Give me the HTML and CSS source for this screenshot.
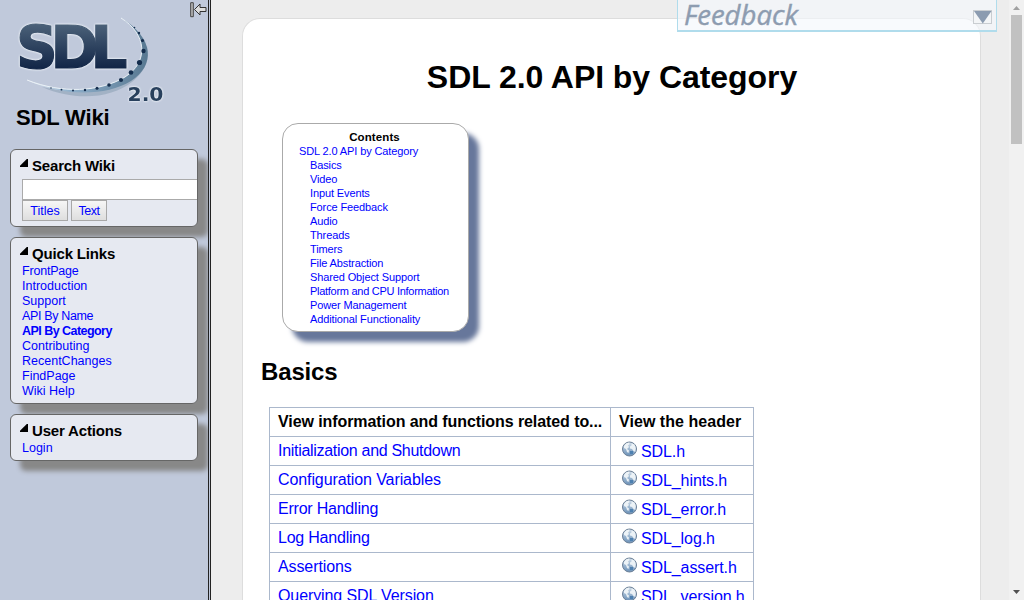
FILE: index.html
```
<!DOCTYPE html>
<html lang="en">
<head>
<meta charset="utf-8">
<title>SDL 2.0 API by Category - SDL Wiki</title>
<link rel="stylesheet" href="styles.css">
</head>
<body>
<svg class="defs" width="0" height="0">
  <defs>
    <linearGradient id="sea" x1="0" y1="0" x2="0" y2="1"><stop offset="0" stop-color="#d3dfea"/><stop offset=".5" stop-color="#9db7d1"/><stop offset="1" stop-color="#6a90b7"/></linearGradient>
    <symbol id="globe" viewBox="0 0 16 16">
      <circle cx="7.500" cy="8" r="7" fill="url(#sea)" stroke="#6b7f96" stroke-width="1"/>
      <path d="M2 5l2-2.500 3-1 .5 1.500-1.500 1.500 1 1.500-2 2 2 1.500-.5 2.500-1.500-1-1-3-2-1zM9.500 2.500l3 1 1.300 3.500-.5 4-1.800-1-1.500-2-2-.5 0-2 1.500-1z" fill="#f3f7fa" opacity=".9"/>
      <path d="M8 10h3v3h-3z" fill="#4d80b0"/>
    </symbol>
  </defs>
</svg>
<aside class="sidebar">
  <svg class="collapse" viewBox="0 0 17 16"><path d="M.7.7h2.600v14H.7z" fill="#bbb" stroke="#444"/><path d="M4.500 7.500l5.500-5.500v3.500h6v4h-6v3.500z" fill="#ddd" stroke="#333"/></svg>
  <svg class="logo" viewBox="0 0 170 110">
    <defs>
      <linearGradient id="ink" gradientUnits="userSpaceOnUse" x1="0" y1="25" x2="0" y2="68"><stop offset="0" stop-color="#4a6078"/><stop offset="1" stop-color="#122647"/></linearGradient>
      <linearGradient id="swoosh" x1="0" y1="0" x2="1" y2="0"><stop offset="0" stop-color="#e4eef6"/><stop offset=".35" stop-color="#8fb0cc"/><stop offset="1" stop-color="#587891"/></linearGradient>
    </defs>
    <path d="M42 87C76 102 112 98 132 82C146 71 150 58 147 46C146 63 137 73 124 80C100 93 73 94 42 87z" fill="#98a9bd" opacity=".75"/>
    <path d="M27 80C62 94 100 92 125 77C149 62 147 34 121 18C155 38 155 66 131 81C105 97 61 96 27 80z" fill="url(#swoosh)"/>
    <path d="M27 80C62 94 100 92 125 77C149 62 147 34 121 18" fill="none" stroke="#f2f7fb" stroke-width=".9"/>
    <g fill="#142d4d"><circle cx="51" cy="88" r=".7"/><circle cx="61.500" cy="89.700" r=".9"/><circle cx="73" cy="90.500" r="1"/><circle cx="85" cy="90" r="1.200"/><circle cx="97" cy="88.300" r="1.500"/><circle cx="109" cy="85" r="1.800"/><circle cx="121" cy="80" r="2.100"/><circle cx="131" cy="72.500" r="2.300"/><circle cx="139.500" cy="62.500" r="2.600"/><circle cx="143.500" cy="51" r="2.200"/><circle cx="142.500" cy="40.500" r="1.600"/><circle cx="139" cy="33" r="1.200"/><circle cx="134.500" cy="27.500" r=".8"/></g>
    <text class="logo-name" x="16 50.500 90.500" y="67.500">SDL</text>
    <text class="logo-version" x="127.500" y="101" textLength="36" lengthAdjust="spacingAndGlyphs">2.0</text>
  </svg>
  <div class="site-name">SDL Wiki</div>
  <section class="panel search">
    <h3>Search Wiki</h3>
    <input class="query" type="text" aria-label="Search">
    <div class="buttons"><button class="titles">Titles</button><button>Text</button></div>
  </section>
  <section class="panel quick">
    <h3>Quick Links</h3>
    <a class="tight">FrontPage</a><a>Introduction</a><a>Support</a><a class="tight">API By Name</a><a class="tight current">API By Category</a><a>Contributing</a><a>RecentChanges</a><a>FindPage</a><a>Wiki Help</a>
  </section>
  <section class="panel">
    <h3>User Actions</h3>
    <a>Login</a>
  </section>
</aside>
<main class="main">
  <article class="page">
    <h1>SDL 2.0 API by Category</h1>
    <nav class="toc">
      <strong>Contents</strong>
      <a class="top">SDL 2.0 API by Category</a>
      <a>Basics</a><a>Video</a><a>Input Events</a><a>Force Feedback</a><a>Audio</a><a>Threads</a><a>Timers</a><a>File Abstraction</a><a>Shared Object Support</a><a class="tight">Platform and CPU Information</a><a>Power Management</a><a>Additional Functionality</a>
    </nav>
    <h2>Basics</h2>
    <table class="api">
      <tr><th>View information and functions related to...</th><th class="header">View the header</th></tr>
      <tr><td><a class="tight">Initialization and Shutdown</a></td><td><a class="ext"><svg><use href="#globe"/></svg>SDL.h</a></td></tr>
      <tr><td><a>Configuration Variables</a></td><td><a class="ext"><svg><use href="#globe"/></svg>SDL_hints.h</a></td></tr>
      <tr><td><a class="snug">Error Handling</a></td><td><a class="ext"><svg><use href="#globe"/></svg>SDL_error.h</a></td></tr>
      <tr><td><a class="snug">Log Handling</a></td><td><a class="ext"><svg><use href="#globe"/></svg>SDL_log.h</a></td></tr>
      <tr><td><a>Assertions</a></td><td><a class="ext"><svg><use href="#globe"/></svg>SDL_assert.h</a></td></tr>
      <tr><td><a>Querying SDL Version</a></td><td><a class="ext"><svg><use href="#globe"/></svg>SDL_version.h</a></td></tr>
    </table>
  </article>
  <div class="feedback">
    <svg viewBox="0 0 318 30">
      <text class="feedback-label" x="6" y="25" textLength="114" lengthAdjust="spacingAndGlyphs">Feedback</text>
      <rect x="295.500" y="10.500" width="18" height="13" fill="#f3f5f7" stroke="#c9cdd1"/>
      <path d="M296 11h17.500l-8.700 12.500z" fill="#8b9bb0"/>
    </svg>
  </div>
</main>
<div class="scrollbar">
  <svg class="arrow" viewBox="0 0 15 15"><path d="M4 10h7L7.500 6z" fill="#a0a0a0"/></svg>
  <div class="thumb"></div>
  <svg class="arrow" viewBox="0 0 15 15"><path d="M4 5h7L7.500 9z" fill="#505050"/></svg>
</div>
</body>
</html>
```
FILE: styles.css
```
* { box-sizing: border-box; }
body { margin: 0; height: 600px; display: flex; overflow: hidden; background: #ededed; color: #000; font-family: "Liberation Sans", Arial, sans-serif; }
a { color: #00f; }
.defs { position: absolute; }
h1, h2, h3 { margin: 0; font-weight: bold; }

.sidebar { flex: none; width: 211px; height: 600px; position: relative; overflow: hidden; background: #c0c9db; border-right: 3px double #222; display: flex; flex-direction: column; padding-left: 10px; font-size: 12.500px; line-height: 15px; }
.collapse { position: absolute; left: 190px; top: 2px; width: 17px; height: 16px; }
.logo { width: 170px; height: 110px; margin: 0 0 -4px -10px; flex: none; }
.logo-name { font: bold 58px "DejaVu Sans", sans-serif; fill: url(#ink); stroke: url(#ink); stroke-width: 1.200px; filter: drop-shadow(0 0 1px #eef3f8) drop-shadow(0 0 .5px #eef3f8); }
.logo-version { font: bold 20px "DejaVu Sans", sans-serif; fill: #28405d; filter: drop-shadow(0 0 1px #eef3f8) drop-shadow(0 0 .5px #eef3f8); }
.site-name { font-size: 22px; line-height: 24px; font-weight: bold; letter-spacing: -.15px; padding-left: 6px; margin-bottom: 19px; }
.panel { position: relative; flex: none; width: 188px; margin-bottom: 10px; padding: 7px 0 4px 11px; border: 1px solid #666; border-radius: 6px; background: #e6e9f1; box-shadow: 10px 10px 5px #888; }
.panel h3 { font-size: 15px; line-height: 17px; letter-spacing: -.17px; padding-left: 10px; margin-bottom: 2px; }
.panel h3::before { content: ""; float: left; width: 8px; height: 8px; margin: 2px 0 0 -12px; background: #000; clip-path: polygon(100% 0, 100% 100%, 0 100%, 0 85%, 85% 0); }
.panel a { display: block; height: 15px; }
.search { height: 78px; }
.query { display: block; width: 175px; height: 21px; margin: 5px 0 0; border: 1px solid #aaa; border-right: 0; background: #fff; }
.buttons { display: flex; gap: 3px; }
.buttons button { width: 36px; height: 21px; padding: 0; border: 1px solid #a8a8a8; border-radius: 0; background: linear-gradient(#f6f6f6, #dedede); color: #00f; font: 12.500px "Liberation Sans", Arial, sans-serif; letter-spacing: -.5px; }
.buttons .titles { width: 46px; letter-spacing: 0; }
.panel .tight { letter-spacing: -.35px; }
.quick a:first-of-type { letter-spacing: -.2px; }
.panel .current { font-weight: bold; letter-spacing: -.54px; }

.main { flex: 1; min-width: 0; position: relative; padding: 18px 28px 0 31px; }
.page { height: 582px; overflow: hidden; background: #fff; border: 1px solid #ddd; border-bottom: 0; border-radius: 18px 18px 0 0; padding: 39px 18px 0; }
h1 { font-size: 32px; line-height: 38px; letter-spacing: -.06px; text-align: center; padding-left: 1px; }
.toc { width: 187px; height: 209px; margin: 27px 0 0 21px; padding: 6px 16px; border: 1px solid #aaa; border-radius: 16px; background: #fff; box-shadow: 10px 10px 5px #67779b; font-size: 11px; line-height: 14px; letter-spacing: -.12px; display: flex; flex-direction: column; white-space: nowrap; }
.toc strong { text-align: center; font-size: 11.500px; letter-spacing: .1px; margin-left: -2px; }
.toc a { padding-left: 11px; }
.toc .top { padding-left: 0; }
.toc .tight { letter-spacing: -.28px; }
h2 { font-size: 24px; line-height: 28px; letter-spacing: -.15px; margin-top: 26px; }
.api { margin: 21px 0 0 8px; border-collapse: collapse; table-layout: fixed; width: 485px; font-size: 16px; line-height: 18px; letter-spacing: -.1px; }
.api th, .api td { height: 29px; border: 1px solid #abb8cc; padding: 0 8px; text-align: left; white-space: nowrap; }
.api th { letter-spacing: -.08px; }
.api .header { letter-spacing: .05px; }
.api th:first-child { width: 341px; }
.api .tight { letter-spacing: -.3px; }
.api .snug { letter-spacing: -.22px; }
.ext { display: flex; align-items: center; padding: 2px 0 0 3px; }
.ext svg { flex: none; width: 16px; height: 16px; margin: -6px 3px 0 0; }

.feedback { position: absolute; top: 0; right: 12px; width: 320px; height: 32px; border: 1px solid #b0dcec; border-top: 0; border-bottom-width: 2px; background: rgba(245, 248, 252, .65); }
.feedback svg { display: block; width: 318px; height: 30px; }
.feedback-label { font: italic 27px "Open Sans", "Noto Sans", sans-serif; fill: #8d9cb0; stroke: #8d9cb0; stroke-width: .4px; }

.scrollbar { flex: none; width: 15px; height: 600px; background: #f1f1f1; display: flex; flex-direction: column; }
.arrow { width: 15px; height: 15px; display: block; flex: none; }
.thumb { width: 11px; height: 129px; margin: 0 2px auto; background: #c1c1c1; }
```
